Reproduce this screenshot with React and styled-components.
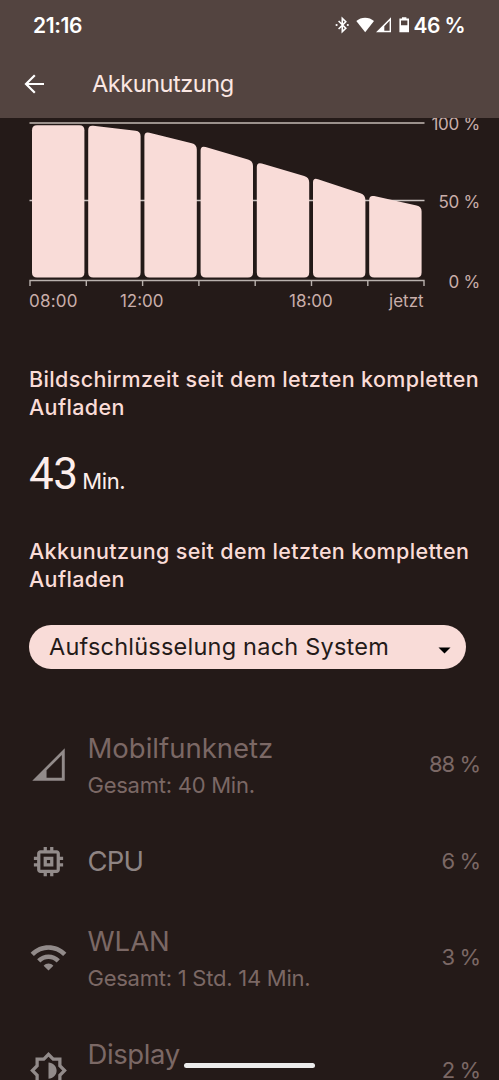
import React from 'react'
import styled, { createGlobalStyle } from 'styled-components'

const GlobalStyle = createGlobalStyle`
  * {
    box-sizing: border-box;
  }
  body {
    margin: 0;
    background: #241a18;
    font-family: Inter, 'Liberation Sans', sans-serif;
    overflow: hidden;
  }
`

const Screen = styled.div`
  display: flex;
  flex-direction: column;
  width: 499px;
  height: 1080px;
  overflow: hidden;
  background: #241a18;
`

const Header = styled.header`
  position: relative;
  z-index: 1;
  flex: none;
  height: 118px;
  background: #534440;
`

const StatusBar = styled.div`
  display: flex;
  align-items: center;
  justify-content: space-between;
  height: 50px;
  padding: 1px 34px 0 33px;
  color: #fff;
`

const StatusIcons = styled.div`
  display: flex;
  align-items: center;
  gap: 4px;

  svg {
    margin-top: -2px;
  }
`

const AppBar = styled.div`
  display: flex;
  align-items: center;
  height: 68px;
  padding-left: 24px;
  gap: 47px;
`

const Label = styled.span`
  display: block;
  white-space: nowrap;
  font-size: ${props => props.$size}px;
  line-height: ${props => props.$line || 28}px;
  font-weight: ${props => props.$weight || 400};
  letter-spacing: ${props => props.$track || 0}px;
  color: ${props => props.$color || 'inherit'};
`

const Content = styled.main`
  flex: none;
  padding-left: 29px;
`

const Chart = styled.section`
  display: flex;
  justify-content: space-between;
  margin-top: -4px;
  padding-right: 19px;
`

const Plot = styled.div`
  width: 396px;
  padding-top: 4px;

  svg {
    display: block;
  }
`

const Hours = styled.div`
  display: grid;
  grid-template-columns: repeat(14, 28.2px);
`

const Hour = styled(Label)`
  grid-row: 1;
  grid-column: ${props => props.$from} / ${props => props.$to};
  justify-self: ${props => props.$align};
`

const Percents = styled.div`
  display: flex;
  flex-direction: column;
  align-items: flex-end;
  justify-content: space-between;
  height: 178px;

  span:nth-child(2) {
    margin-bottom: 3px;
  }
`

const Heading = styled.h2`
  margin: ${props => props.$top}px 0 0;
  font-size: 21.5px;
  line-height: 28px;
  font-weight: 500;
  letter-spacing: 0.37px;
  white-space: nowrap;
  color: #fadcd7;
`

const ScreenTime = styled.div`
  display: flex;
  align-items: baseline;
  gap: 5px;
  margin-top: 26px;
  height: 60px;
  color: #fdeeeb;
`

const Minutes = styled(Label)`
  font-family: Roboto, Inter, sans-serif;
`

const Dropdown = styled.button`
  display: flex;
  align-items: center;
  justify-content: space-between;
  width: 437px;
  height: 44px;
  margin: 32px 0 39px;
  padding: 0 15px 0 20px;
  border: 0;
  border-radius: 22px;
  background: #f9dcd8;
  color: #241a18;
  font-family: inherit;

  svg {
    margin-top: 7px;
  }
`

const Row = styled.div`
  display: flex;
  align-items: center;
  height: ${props => (props.$single ? 80 : 113)}px;
  padding-right: 19px;
  color: #7b6865;

  > svg {
    flex: none;
    margin-right: 19.5px;
  }
`

const RowText = styled.div`
  flex: 1;
  padding-top: ${props => (props.$single ? 0 : 4)}px;
`

const Share = styled(Label)`
  margin-top: -1px;
`

const HomeHandle = styled.div`
  position: absolute;
  left: 184px;
  top: 1063px;
  width: 131px;
  height: 5px;
  border-radius: 3px;
  background: #ececec;
`

// battery level at the start and end of every two hour slot, as y in the plot
const levels = [
  [7.3, 7.3],
  [7.3, 13.3],
  [13.5, 26.5],
  [27.5, 43],
  [44, 59.5],
  [59.5, 77],
  [77, 88.5],
]

const barPath = ([start, end], i) => {
  const l = 3 + i * 56.2
  const r = l + 52.4
  const b = 159.5
  const c = 5
  const d = ((end - start) / 52.4) * c
  return `M${l} ${start + c}Q${l} ${start} ${l + c} ${start + d}L${r - c} ${end - d}Q${r} ${end} ${r} ${end + c}V${b - c}Q${r} ${b} ${r - c} ${b}H${l + c}Q${l} ${b} ${l} ${b - c}Z`
}

const BatteryPlot = () => (
  <svg width="396" height="169" viewBox="0 0 396 169">
    <path d="M.5 5H395.5" stroke="#9b918c" strokeWidth="2" />
    <path d="M.5 82.5H395.5" stroke="#c9c2bf" strokeWidth="1.4" />
    {levels.map((level, i) => (
      <path key={i} d={barPath(level, i)} fill="#f9dcd8" />
    ))}
    <path
      d="M1 168V162.5H395V168M57.3 162.5V168M113.6 162.5V168M169.9 162.5V168M226.2 162.5V168M282.5 162.5V168M338.8 162.5V168"
      fill="none"
      stroke="#b9b1ad"
      strokeWidth="1.4"
    />
  </svg>
)

const icons = {
  cpu: 'M15 9H9v6h6V9zm-2 4h-2v-2h2v2zm8-2V9h-2V7c0-1.1-.9-2-2-2h-2V3h-2v2h-2V3H9v2H7c-1.1 0-2 .9-2 2v2H3v2h2v2H3v2h2v2c0 1.1.9 2 2 2h2v2h2v-2h2v2h2v-2h2c1.1 0 2-.9 2-2v-2h2v-2h-2v-2h2zm-4 6H7V7h10v10z',
  wifi: 'M1 9l2 2c4.97-4.97 13.03-4.97 18 0l2-2C16.93 2.93 7.08 2.93 1 9zm8 8l3 3 3-3c-1.65-1.66-4.34-1.66-6 0zm-4-4l2 2c2.76-2.76 7.24-2.76 10 0l2-2C15.14 9.14 8.87 9.14 5 13z',
  display:
    'M20 8.69V4h-4.69L12 .69 8.69 4H4v4.69L.69 12 4 15.31V20h4.69L12 23.31 15.31 20H20v-4.69L23.31 12 20 8.69zm-2 5.79V18h-3.52L12 20.48 9.52 18H6v-3.52L3.52 12 6 9.52V6h3.52L12 3.52 14.48 6H18v3.52L20.48 12 18 14.48zM12 7v10c2.76 0 5-2.24 5-5s-2.24-5-5-5z',
  signal: 'M2 22H22V2zM20.2 20.2H10.8V15.6L20.2 6.2z',
}

const RowIcon = ({ name }) => (
  <svg width="39" height="39" viewBox="0 0 24 24" fill="#928b8a" fillRule="evenodd">
    <path d={icons[name]} />
  </svg>
)

const consumers = [
  { icon: 'signal', name: 'Mobilfunknetz', total: 'Gesamt: 40 Min.', share: '88 %' },
  { icon: 'cpu', name: 'CPU', share: '6 %', color: '#8e8483', track: -0.8 },
  { icon: 'wifi', name: 'WLAN', total: 'Gesamt: 1 Std. 14 Min.', share: '3 %' },
  { icon: 'display', name: 'Display', total: '\u00a0', share: '2 %', track: -0.4 },
]

const App = () => (
  <>
    <GlobalStyle />
    <Screen>
      <Header>
        <StatusBar>
          <Label $size={21} $weight={600} $track={-0.4}>
            21:16
          </Label>
          <StatusIcons>
            <svg width="75" height="20" viewBox="0 0 75 20" fill="#fff">
              <path d="M3.6 6L10.8 13.2 7.3 16.6V3.4L10.8 6.8 3.6 14" fill="none" stroke="#fff" strokeWidth="1.6" />
              <circle cx="1.6" cy="10" r="1.1" />
              <circle cx="12.8" cy="10" r="1.1" />
              <path d="M21.3 6C26 1.5 34.2 1.5 39 6L30.2 17.2z" />
              <path d="M41 17.2H56V2.2zM54.6 15.8H49.3V11.2L54.6 5.8z" fillRule="evenodd" />
              <path d="M67 2.2h4.4v1.4h2.6v13.6h-9.6V3.6h2.6zM66 5.4v4.9h6.4V5.4z" fillRule="evenodd" />
            </svg>
            <Label $size={21} $weight={600} $track={-0.6}>
              46 %
            </Label>
          </StatusIcons>
        </StatusBar>
        <AppBar>
          <svg width="21" height="20" viewBox="0 0 21 20" fill="none" stroke="#fff" strokeWidth="2.2">
            <path d="M20 10H2.3M10.8 1.2L2 10L10.8 18.8" />
          </svg>
          <Label $size={23.5} $track={-0.45} $color="#fbe7e3">
            Akkunutzung
          </Label>
        </AppBar>
      </Header>
      <Content>
        <Chart>
          <Plot>
            <BatteryPlot />
            <Hours>
              <Hour $size={17} $color="#c9aeaa" $track={0.2} $from={1} $to={4} $align="start">
                08:00
              </Hour>
              <Hour $size={17} $color="#c9aeaa" $from={4} $to={6} $align="center">
                12:00
              </Hour>
              <Hour $size={17} $color="#c9aeaa" $from={10} $to={12} $align="center">
                18:00
              </Hour>
              <Hour $size={17} $color="#c9aeaa" $from={13} $to={15} $align="end">
                jetzt
              </Hour>
            </Hours>
          </Plot>
          <Percents>
            {['100 %', '50 %', '0 %'].map(value => (
              <Label key={value} $size={17} $line={20} $track={-0.25} $color="#c9aeaa">
                {value}
              </Label>
            ))}
          </Percents>
        </Chart>
        <Heading $top={50}>
          Bildschirmzeit seit dem letzten kompletten
          <br />
          Aufladen
        </Heading>
        <ScreenTime>
          <Minutes $size={44} $line={54} $track={-0.6}>
            43
          </Minutes>
          <Label $size={22} $track={-0.4}>
            Min.
          </Label>
        </ScreenTime>
        <Heading $top={30}>
          Akkunutzung seit dem letzten kompletten
          <br />
          Aufladen
        </Heading>
        <Dropdown>
          <Label $size={23.5} $track={0.22}>
            Aufschlüsselung nach System
          </Label>
          <svg width="13" height="7" viewBox="0 0 13 7">
            <path d="M.5.5H12.5L6.5 6.5z" fill="#000" />
          </svg>
        </Dropdown>
        {consumers.map(({ icon, name, total, share, color, track }) => (
          <Row key={name} $single={!total}>
            <RowIcon name={icon} />
            <RowText $single={!total}>
              <Label $size={27.5} $line={36} $color={color} $track={track}>
                {name}
              </Label>
              {total ? (
                <Label $size={22} $line={38} $track={-0.25}>
                  {total}
                </Label>
              ) : null}
            </RowText>
            <Share $size={22} $track={-1}>
              {share}
            </Share>
          </Row>
        ))}
      </Content>
      <HomeHandle />
    </Screen>
  </>
)

export default App
